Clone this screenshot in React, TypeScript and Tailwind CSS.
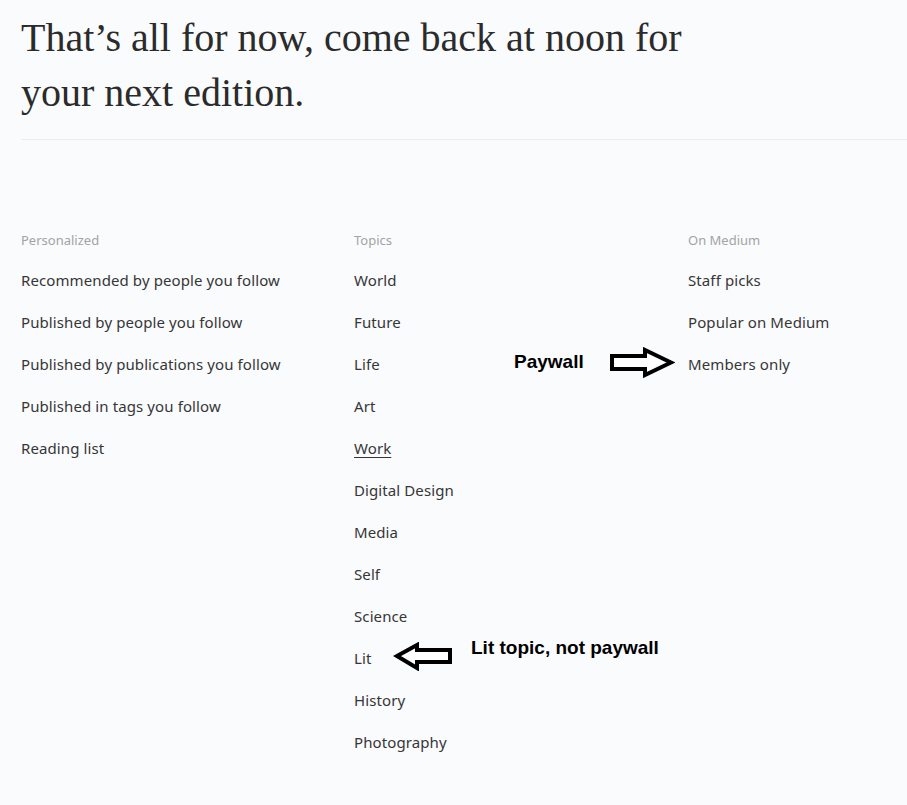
import React from "react";

const personalized = [
  "Recommended by people you follow",
  "Published by people you follow",
  "Published by publications you follow",
  "Published in tags you follow",
  "Reading list",
];
const topics = [
  "World",
  "Future",
  "Life",
  "Art",
  "Work",
  "Digital Design",
  "Media",
  "Self",
  "Science",
  "Lit",
  "History",
  "Photography",
];
const onMedium = ["Staff picks", "Popular on Medium", "Members only"];

function Column({ title, items }: { title: string; items: string[] }) {
  return (
    <div className="flex flex-col">
      <div className="text-[13px] leading-[20px] text-[#a3a3a3]">{title}</div>
      <ul className="mt-[9px] flex flex-col">
        {items.map((it) => (
          <li
            key={it}
            className={
              "text-[15px] leading-[42px] tracking-[0.1px] text-[#363636] " +
              (it === "Work" ? "underline underline-offset-[3px] decoration-[1px]" : "")
            }
          >
            {it}
          </li>
        ))}
      </ul>
    </div>
  );
}

function RightArrow() {
  return (
    <svg width="66" height="31" viewBox="0 0 66 31">
      <path
        d="M3 9 H36 V3 L62 15.5 L36 28 V22 H3 Z"
        fill="white"
        stroke="black"
        strokeWidth="4"
        strokeLinejoin="miter"
      />
    </svg>
  );
}

function LeftArrow() {
  return (
    <svg width="60" height="29" viewBox="0 0 60 29">
      <path
        d="M4 14 L24 3 V8 H57 V20 H24 V26 Z"
        fill="white"
        stroke="black"
        strokeWidth="4"
        strokeLinejoin="miter"
      />
    </svg>
  );
}

export default function App() {
  return (
    <div
      className="relative min-h-[805px] w-[907px] overflow-hidden bg-[#fafbfd]"
      style={{ fontFamily: '"Noto Sans", sans-serif' }}
    >
      <div className="pl-[21px] pt-[10px]">
        <h1
          className="text-[40px] leading-[55px] text-[#2b2b2b]"
          style={{ fontFamily: '"Liberation Serif", serif' }}
        >
          That’s all for now, come back at noon for
          <br />
          your next edition.
        </h1>
        <div className="mt-[19px] h-px bg-[#ececee]" />
      </div>

      <div className="grid grid-cols-[333px_334px_333px] pl-[21px] pt-[90px]">
        <Column title="Personalized" items={personalized} />
        <Column title="Topics" items={topics} />
        <Column title="On Medium" items={onMedium} />
      </div>

      <div
        className="absolute left-[514px] top-[348px] text-[19px] font-bold text-black"
        style={{ fontFamily: '"Liberation Sans", Arial, sans-serif' }}
      >
        Paywall
      </div>
      <div className="absolute left-[609px] top-[347px]">
        <RightArrow />
      </div>
      <div
        className="absolute left-[471px] top-[634px] text-[19px] font-bold text-black"
        style={{ fontFamily: '"Liberation Sans", Arial, sans-serif' }}
      >
        Lit topic, not paywall
      </div>
      <div className="absolute left-[393px] top-[642px]">
        <LeftArrow />
      </div>
    </div>
  );
}
